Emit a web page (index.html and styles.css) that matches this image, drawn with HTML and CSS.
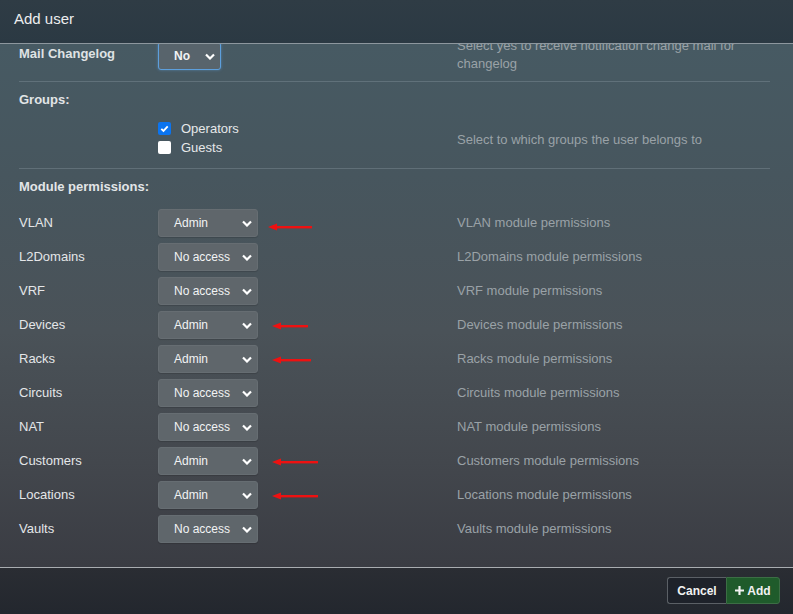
FILE: index.html
```html
<!DOCTYPE html>
<html>
<head>
<meta charset="utf-8">
<link rel="stylesheet" href="styles.css">
</head>
<body>
<div class="modal">
  <div class="modal-header">Add user</div>
  <div class="modal-body">
    <div class="content">
      <div class="row row-mail">
        <div class="label">Mail Changelog</div>
        <div class="field"><div class="select select-sm focused"><span>No</span><svg class="chev" viewBox="0 0 10 6"><path d="M1 1l4 4 4-4" /></svg></div></div>
        <div class="help">Select yes to receive notification change mail for changelog</div>
      </div>
      <div class="heading">Groups:</div>
      <div class="row row-groups">
        <div class="label"></div>
        <div class="field">
          <div class="check-line"><span class="box checked"><svg viewBox="0 0 12 12"><path d="M2.5 6.3l2.4 2.4 4.6-5" /></svg></span>Operators</div>
          <div class="check-line"><span class="box"></span>Guests</div>
        </div>
        <div class="help">Select to which groups the user belongs to</div>
      </div>
      <div class="heading heading-mod">Module permissions:</div>
      <div class="perms">
        <div class="perm"><div class="label">VLAN</div><div class="field"><div class="select"><span>Admin</span><svg class="chev" viewBox="0 0 10 6"><path d="M1 1l4 4 4-4" /></svg></div><svg class="arrow arrow-vlan" viewBox="0 0 44 8"><path d="M0 4L9 0.5V7.5Z"/><rect x="8" y="3" width="36" height="2.4"/></svg></div><div class="help">VLAN module permissions</div></div>
        <div class="perm"><div class="label">L2Domains</div><div class="field"><div class="select"><span>No access</span><svg class="chev" viewBox="0 0 10 6"><path d="M1 1l4 4 4-4" /></svg></div></div><div class="help">L2Domains module permissions</div></div>
        <div class="perm"><div class="label">VRF</div><div class="field"><div class="select"><span>No access</span><svg class="chev" viewBox="0 0 10 6"><path d="M1 1l4 4 4-4" /></svg></div></div><div class="help">VRF module permissions</div></div>
        <div class="perm"><div class="label">Devices</div><div class="field"><div class="select"><span>Admin</span><svg class="chev" viewBox="0 0 10 6"><path d="M1 1l4 4 4-4" /></svg></div><svg class="arrow arrow-dev" viewBox="0 0 36 8"><path d="M0 4L9 0.5V7.5Z"/><rect x="8" y="3" width="28" height="2.4"/></svg></div><div class="help">Devices module permissions</div></div>
        <div class="perm"><div class="label">Racks</div><div class="field"><div class="select"><span>Admin</span><svg class="chev" viewBox="0 0 10 6"><path d="M1 1l4 4 4-4" /></svg></div><svg class="arrow arrow-racks" viewBox="0 0 39 8"><path d="M0 4L9 0.5V7.5Z"/><rect x="8" y="3" width="31" height="2.4"/></svg></div><div class="help">Racks module permissions</div></div>
        <div class="perm"><div class="label">Circuits</div><div class="field"><div class="select"><span>No access</span><svg class="chev" viewBox="0 0 10 6"><path d="M1 1l4 4 4-4" /></svg></div></div><div class="help">Circuits module permissions</div></div>
        <div class="perm"><div class="label">NAT</div><div class="field"><div class="select"><span>No access</span><svg class="chev" viewBox="0 0 10 6"><path d="M1 1l4 4 4-4" /></svg></div></div><div class="help">NAT module permissions</div></div>
        <div class="perm"><div class="label">Customers</div><div class="field"><div class="select"><span>Admin</span><svg class="chev" viewBox="0 0 10 6"><path d="M1 1l4 4 4-4" /></svg></div><svg class="arrow arrow-cust" viewBox="0 0 46 8"><path d="M0 4L9 0.5V7.5Z"/><rect x="8" y="3" width="38" height="2.4"/></svg></div><div class="help">Customers module permissions</div></div>
        <div class="perm"><div class="label">Locations</div><div class="field"><div class="select"><span>Admin</span><svg class="chev" viewBox="0 0 10 6"><path d="M1 1l4 4 4-4" /></svg></div><svg class="arrow arrow-cust" viewBox="0 0 46 8"><path d="M0 4L9 0.5V7.5Z"/><rect x="8" y="3" width="38" height="2.4"/></svg></div><div class="help">Locations module permissions</div></div>
        <div class="perm"><div class="label">Vaults</div><div class="field"><div class="select"><span>No access</span><svg class="chev" viewBox="0 0 10 6"><path d="M1 1l4 4 4-4" /></svg></div></div><div class="help">Vaults module permissions</div></div>
      </div>
    </div>
  </div>
  <div class="modal-footer">
    <div class="btn-group">
      <button class="btn btn-cancel">Cancel</button>
      <button class="btn btn-add"><svg viewBox="0 0 10 10"><path d="M3.8 0h2.4v3.8H10v2.4H6.2V10H3.8V6.2H0V3.8h3.8z"/></svg>Add</button>
    </div>
  </div>
</div>
</body>
</html>
```

FILE: styles.css
```css
html, body {
  margin: 0;
  padding: 0;
  width: 793px;
  height: 614px;
  overflow: hidden;
}
body {
  font-family: "Liberation Sans", Arial, sans-serif;
  font-size: 13px;
  color: #e2e4e6;
  background: #2c3a44;
}
.modal {
  display: flex;
  flex-direction: column;
  height: 614px;
}
.modal-header {
  height: 44px;
  box-sizing: border-box;
  padding: 0 14px;
  display: flex;
  align-items: center;
  padding-bottom: 7px;
  font-size: 15px;
  color: #eceeef;
  background: linear-gradient(180deg, #2f3c45 0%, #2b3943 100%);
  border-bottom: 1px solid #8d979e;
}
.modal-body {
  height: 523px;
  overflow: hidden;
  background: linear-gradient(180deg, #475a63 0%, #47565e 25%, #4a5258 55%, #43474d 80%, #3a3c43 100%);
  padding: 0 23px 0 19px;
}
.content {
  margin-top: -7px;
}
.row {
  display: grid;
  grid-template-columns: 139px 299px 1fr;
  border-bottom: 1px solid rgba(160, 175, 185, 0.28);
}
.label {
  font-size: 13px;
  line-height: 18px;
  color: #e4e6e8;
}
.row-mail .label {
  padding-top: 8px;
  font-weight: bold;
  color: #dfe2e4;
}
.row-mail {
  padding-bottom: 8px;
}
.row-mail .field {
  padding-top: 5px;
}
.help {
  color: #9aa2a7;
  font-size: 13px;
  line-height: 18px;
}
.row-mail .help {
  padding-right: 20px;
}
.heading {
  font-weight: bold;
  line-height: 18px;
  padding-top: 9px;
  color: #e2e5e7;
}
.row-groups {
  padding-top: 10px;
  padding-bottom: 11px;
  align-items: center;
}
.row-groups .help {
  padding-top: 4px;
}
.check-line {
  display: flex;
  align-items: center;
  line-height: 19px;
  color: #e6e8ea;
}
.box {
  width: 13px;
  height: 13px;
  box-sizing: border-box;
  border-radius: 2px;
  background: #fff;
  margin-right: 10px;
  display: flex;
  align-items: center;
  justify-content: center;
}
.box.checked {
  background: #0b74ef;
}
.box svg {
  width: 11px;
  height: 11px;
  fill: none;
  stroke: #fff;
  stroke-width: 2;
}
.heading-mod {
  padding-top: 9px;
}
.perms {
  padding-top: 13px;
  display: flex;
  flex-direction: column;
  gap: 6px;
}
.perm {
  display: grid;
  grid-template-columns: 139px 299px 1fr;
  align-items: center;
  height: 28px;
}
.field {
  position: relative;
}
.select {
  width: 100px;
  height: 28px;
  box-sizing: border-box;
  background: #5f666b;
  border: 1px solid #666d72;
  border-radius: 3px;
  display: flex;
  align-items: center;
  justify-content: space-between;
  padding: 0 5px 0 15px;
  font-size: 12px;
  color: #f2f3f4;
  box-shadow: 0 1px 1px rgba(0,0,0,0.15);
}
.select-sm {
  width: 63px;
}
.select.focused {
  border: 1px solid #5d9fdc;
  box-shadow: 0 0 3px rgba(93, 159, 220, 0.6);
  background: #58646c;
  font-weight: bold;
}
.chev {
  width: 10px;
  height: 7px;
  fill: none;
  stroke: #fff;
  stroke-width: 2.2;
}
.arrow {
  position: absolute;
  top: 50%;
  height: 8px;
  fill: #ee1111;
}
.arrow-vlan { left: 110px; width: 44px; margin-top: 0px; }
.arrow-dev { left: 114px; width: 36px; margin-top: -3px; }
.arrow-racks { left: 114px; width: 39px; margin-top: -3px; }
.arrow-cust { left: 114px; width: 46px; margin-top: -3px; }
.modal-footer {
  flex: 1;
  border-top: 1px solid #a9adb1;
  background: linear-gradient(180deg, #2a2d33 0%, #23272e 100%);
  display: flex;
  justify-content: flex-end;
  align-items: flex-start;
  padding: 9px 13px 0 0;
}
.btn-group {
  display: flex;
}
.btn {
  height: 27px;
  box-sizing: border-box;
  font-family: "Liberation Sans", Arial, sans-serif;
  font-size: 12px;
  font-weight: bold;
  color: #f2f2f2;
  border: 1px solid #5b6066;
  display: flex;
  align-items: center;
  justify-content: center;
  padding: 0;
}
.btn-cancel {
  width: 59px;
  background: #1e222a;
  border-radius: 3px 0 0 3px;
  border-right: none;
}
.btn-add {
  width: 54px;
  background: #1f5b2b;
  border-color: #3c6e45;
  border-radius: 0 3px 3px 0;
}
.btn-add svg {
  width: 9px;
  height: 9px;
  fill: #f2f2f2;
  margin-right: 3px;
}
```
